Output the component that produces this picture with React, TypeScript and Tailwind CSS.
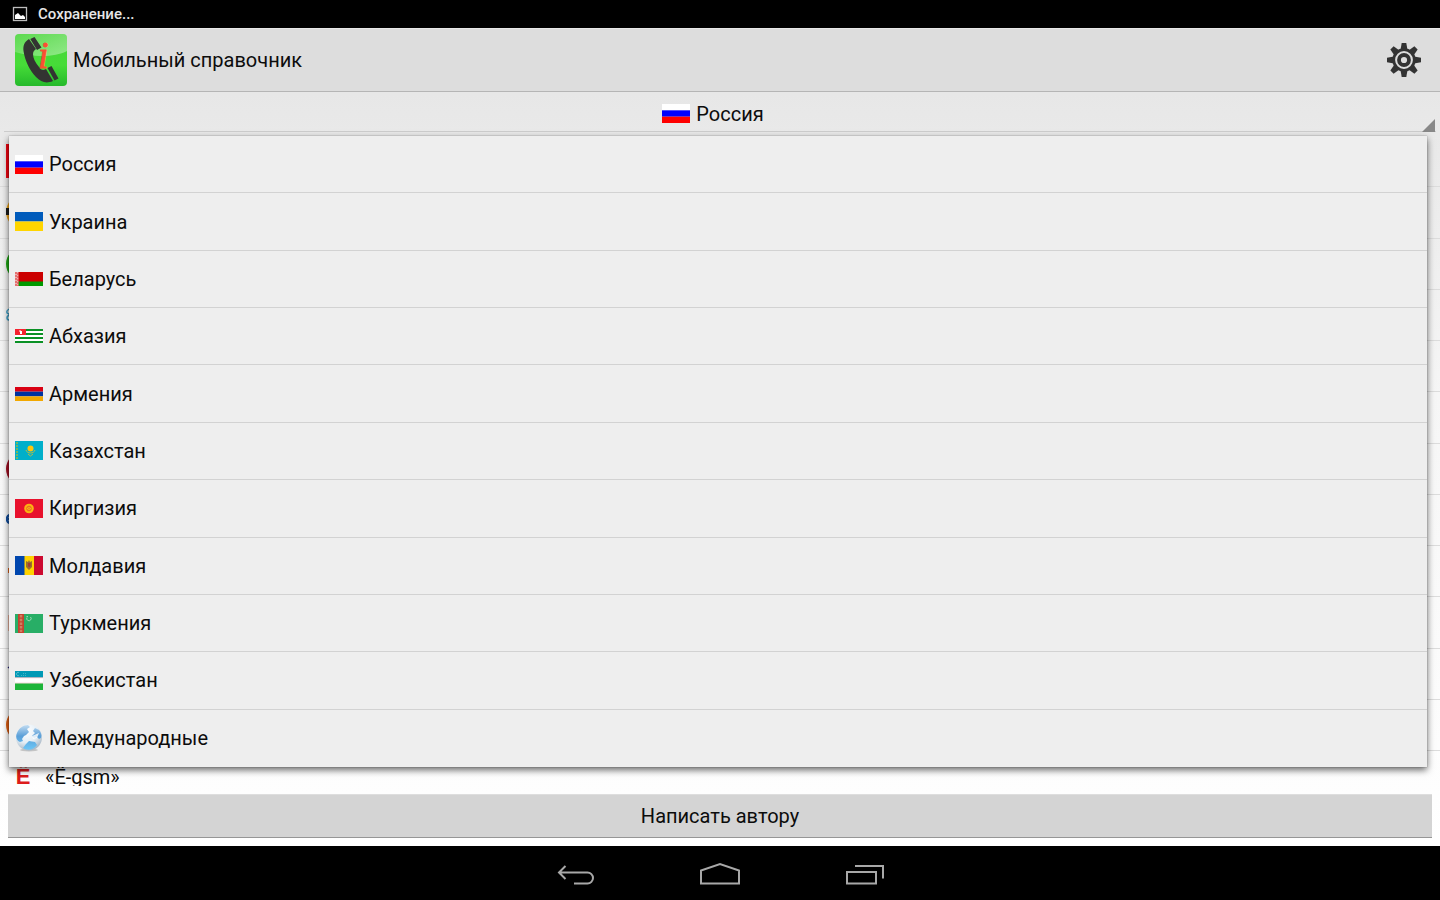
import { useState } from 'react'
import type { ReactNode } from 'react'

type Country = {
  name: string
  flag: ReactNode
}

function Flag({ height = 19, children }: { height?: number; children: ReactNode }) {
  return (
    <svg width="28" height={height} viewBox={`0 0 28 ${height}`} className="shrink-0" aria-hidden="true">
      {children}
    </svg>
  )
}

function Stripes({ colors, height = 19 }: { colors: string[]; height?: number }) {
  const step = height / colors.length
  return (
    <Flag height={height}>
      {colors.map((color, i) => (
        <rect key={i} y={i * step} width="28" height={step} fill={color} />
      ))}
    </Flag>
  )
}

function Globe() {
  return (
    <svg width="28" height="28" viewBox="0 0 28 28" className="shrink-0" aria-hidden="true">
      <defs>
        <radialGradient id="globe" cx="40%" cy="25%" r="75%">
          <stop offset="0" stopColor="#ffffff" />
          <stop offset="0.6" stopColor="#e3edf5" />
          <stop offset="1" stopColor="#a9b8c6" />
        </radialGradient>
        <linearGradient id="land" x1="0" y1="0" x2="0" y2="1">
          <stop offset="0" stopColor="#c3dcf1" />
          <stop offset="0.45" stopColor="#5a9fd8" />
          <stop offset="1" stopColor="#6cc6f6" />
        </linearGradient>
      </defs>
      <ellipse cx="14" cy="26" rx="9" ry="1.5" fill="#c4c4c4" />
      <circle cx="14" cy="13.5" r="13" fill="url(#globe)" />
      <path
        d="M2 9C4 4 8 1 13 1L15 3L12 5L14 8L11 11L9 12L7 15L8 17L5 18C2 17 0 13 2 9ZM20 4L24 6C26 8 27 11 26 14L24 15L22 13L19 14L17 12L20 9L18 7ZM11 20L14 17L20 18L22 21C19 26 12 27 8 24Z"
        fill="url(#land)"
      />
      <path d="M17 12L24 9L22 14L18 15Z" fill="#fff" opacity="0.8" />
    </svg>
  )
}

const russia = <Stripes colors={['#ffffff', '#0000fe', '#fe0000']} />

const countries: Country[] = [
  { name: 'Россия', flag: russia },
  { name: 'Украина', flag: <Stripes colors={['#005bbb', '#ffd500']} /> },
  {
    name: 'Беларусь',
    flag: (
      <Flag height={14}>
        <rect width="28" height="10" fill="#cb0000" />
        <rect y="9.5" width="28" height="4.5" fill="#009900" />
        <rect width="3.5" height="14" fill="#eeb0b0" />
        <path d="M1 0V14M3 1V14" stroke="#d33" strokeWidth="1" strokeDasharray="2 1" />
      </Flag>
    ),
  },
  {
    name: 'Абхазия',
    flag: (
      <Flag height={14}>
        <rect width="28" height="14" fill="#fff" />
        <path d="M0 1H28M0 5H28M0 9H28M0 13H28" stroke="#0a9125" strokeWidth="2" />
        <rect width="11" height="6" fill="#f5222f" />
        <path d="M4.5 2.5V1.5M5.5 5V1.5M6.5 5V2" stroke="#fff" strokeWidth="1" />
      </Flag>
    ),
  },
  { name: 'Армения', flag: <Stripes height={14} colors={['#d90012', '#0033a0', '#f2a800']} /> },
  {
    name: 'Казахстан',
    flag: (
      <Flag>
        <rect width="28" height="19" fill="#00afca" />
        <path d="M2 1V18" stroke="#9cb93e" strokeWidth="1.5" strokeDasharray="2 1" />
        <circle cx="15.5" cy="7.5" r="3" fill="#fec50c" />
        <path d="M11 9C12 13 19 13 20 9M13 13L15.5 15L18 13" stroke="#b4bd45" fill="none" />
      </Flag>
    ),
  },
  {
    name: 'Киргизия',
    flag: (
      <Flag>
        <rect width="28" height="19" fill="#e8112d" />
        <circle cx="14" cy="9.5" r="4.8" fill="#fbb211" />
        <circle cx="14" cy="9.5" r="2.3" fill="#f6cf15" stroke="#e9472a" strokeWidth="0.8" />
        <path d="M12.5 8L15.5 11M15.5 8L12.5 11" stroke="#e9472a" strokeWidth="0.6" />
      </Flag>
    ),
  },
  {
    name: 'Молдавия',
    flag: (
      <Flag>
        <rect width="10" height="19" fill="#0046ae" />
        <rect x="9.5" width="9.5" height="19" fill="#ffd200" />
        <rect x="19" width="9" height="19" fill="#cc092f" />
        <path d="M11 5L13 6L14 4L15 6L17 5V11L14 14L11 11Z" fill="#99702e" />
        <path d="M13 7H15.5V10L14 11.5L13 10Z" fill="#a33b32" />
      </Flag>
    ),
  },
  {
    name: 'Туркмения',
    flag: (
      <Flag>
        <rect width="28" height="19" fill="#28ae66" />
        <rect x="3" width="6" height="19" fill="#c4432f" />
        <path d="M6 1V18" stroke="#cf7f60" strokeWidth="2.5" strokeDasharray="2.5 1.2" />
        <path d="M12 3.500A2.200 2.200 0 1 0 15.500 3" stroke="#9bdab5" fill="none" />
        <path d="M11.5 2.500H13" stroke="#9bdab5" />
      </Flag>
    ),
  },
  {
    name: 'Узбекистан',
    flag: (
      <Flag>
        <rect width="28" height="19" fill="#fff" />
        <rect width="28" height="6.5" fill="#0099b5" />
        <path d="M0 6.700H28M0 12.200H28" stroke="#e9a0a4" strokeWidth="0.6" />
        <rect y="12.5" width="28" height="6.5" fill="#1eb53a" />
        <path d="M4 1.500A1.700 1.700 0 1 0 4 4.500" stroke="#6cc4d4" strokeWidth="0.8" fill="none" />
        <path d="M6 4.500H11M8 2.500H11" stroke="#6cc4d4" strokeWidth="0.6" strokeDasharray="1 1" />
      </Flag>
    ),
  },
  { name: 'Международные', flag: <Globe /> },
]

// operator logos, one per row of the list under the drop-down
const operators: ReactNode[] = [
  <rect width="34" height="34" fill="#f00511" />,
  <>
    <circle cx="17" cy="17" r="17" fill="#f5a81c" />
    <path d="M0 13H34V20H0Z" fill="#1c1c1c" />
  </>,
  <circle cx="17" cy="17" r="17" fill="#1fa814" />,
  <path d="M3 11C0 13 0 15 3 16M4 17C0 18 0 22 4 22" stroke="#3f9fc6" strokeWidth="1.5" fill="none" />,
  null,
  null,
  <circle cx="17" cy="17" r="17" fill="#a50f24" />,
  <path d="M7 16H1C1 11 6 11 7 13M1 16C1 21 6 21 7 19" stroke="#1450a0" strokeWidth="2.5" fill="none" />,
  <rect x="2" y="14" width="8" height="5" fill="#e8641b" />,
  <rect x="2" y="10" width="12" height="16" fill="#f3b9a3" />,
  <path d="M2 10L6 13" stroke="#25257c" strokeWidth="1.5" />,
  <circle cx="17" cy="17" r="17" fill="#e05f12" />,
]

function AppLogo() {
  return (
    <svg width="52" height="52" viewBox="0 0 52 52" aria-hidden="true">
      <defs>
        <linearGradient id="logo" x1="0" y1="0" x2="0" y2="1">
          <stop offset="0" stopColor="#4ad53b" />
          <stop offset="0.6" stopColor="#46dc38" />
          <stop offset="1" stopColor="#25b92b" />
        </linearGradient>
        <linearGradient id="gloss" x1="0" y1="0" x2="1" y2="1">
          <stop offset="0" stopColor="#fff" stopOpacity="0.1" />
          <stop offset="1" stopColor="#fff" stopOpacity="0.4" />
        </linearGradient>
      </defs>
      <rect width="52" height="52" rx="4" fill="url(#logo)" />
      <path d="M0 4Q0 0 4 0H48Q52 0 52 4V17C40 23 20 24 0 18Z" fill="url(#gloss)" />
      <path
        d="M14 5C9 8 8 12 8.500 17C10 27 15 37 21 43C26 48 31 50 38 47L31 35C28 37 26 36 24 33C20 28 18 24 18 20C18 17 20 16 21 15Z"
        fill="#333432"
      />
      <path
        d="M15.300 5L19.500 3L26.500 13.500L22 16ZM32.500 34L36.500 32L43.500 44.500L39.500 46.500Z"
        fill="#333432"
      />
      <text
        x="23"
        y="34"
        fontSize="38"
        fontStyle="italic"
        fontFamily="Liberation Serif, serif"
        fill="#fb4f32"
        stroke="#fb4f32"
        strokeWidth="0.8"
      >
        i
      </text>
    </svg>
  )
}

function GearIcon() {
  return (
    <svg width="34" height="34" viewBox="-17 -17 34 34" aria-hidden="true">
      {[0, 45, 90, 135, 180, 225, 270, 315].map(angle => (
        <path key={angle} d="M-3.500 -10L-2.300 -17H2.300L3.500 -10Z" transform={`rotate(${angle})`} fill="#333" />
      ))}
      <circle r="10.3" fill="none" stroke="#333" strokeWidth="2.8" />
      <circle r="5" fill="none" stroke="#333" strokeWidth="3.8" />
    </svg>
  )
}

export default function App() {
  const [country, setCountry] = useState('Россия')
  const current = countries.find(c => c.name === country) ?? countries[0]

  return (
    <div className="flex h-screen flex-col overflow-hidden bg-black font-[Roboto,sans-serif] text-[20px] leading-6 text-[#0c0c0c]">
      <div className="flex h-7 shrink-0 items-center gap-[10px] px-3 text-[15px] font-medium text-[#e6e6e6]">
        <svg width="16" height="16" viewBox="0 0 16 16" aria-hidden="true">
          <rect x="1.5" y="1.5" width="13" height="13" fill="none" stroke="#bdbdbd" strokeWidth="1.3" />
          <path d="M3 13V9L6 7L9 10L11 9L13 11V13Z" fill="#fff" />
        </svg>
        <span>Сохранение...</span>
      </div>

      <header className="flex h-16 shrink-0 items-center justify-between border-t border-b border-t-[#e8e8e8] border-b-[#b5b5b5] bg-[#dddddd] pr-[19px] pl-[15px]">
        <div className="flex items-center gap-[6px]">
          <AppLogo />
          <h1>Мобильный справочник</h1>
        </div>
        <button type="button" aria-label="Настройки">
          <GearIcon />
        </button>
      </header>

      <main className="flex min-h-0 flex-1 flex-col bg-linear-to-b from-[#e7e7e7] via-[#f6f6f6] via-40% to-white">
        <div className="relative z-10 shrink-0 px-1">
          <div className="flex h-10 items-center justify-center gap-[6px] border-b border-[#cccccc] pt-1 pr-[14px]">
            {current.flag}
            <select
              aria-label="Страна"
              value={country}
              onChange={e => setCountry(e.target.value)}
              className="field-sizing-content appearance-none bg-transparent outline-none"
            >
              {countries.map(c => (
                <option key={c.name}>{c.name}</option>
              ))}
            </select>
          </div>
          <svg width="13" height="13" viewBox="0 0 13 13" className="absolute right-[5px] bottom-0" aria-hidden="true">
            <path d="M13 0V13H0Z" fill="#888" />
          </svg>

          <ul className="absolute top-11 right-[13px] left-[9px] grid h-[631px] auto-rows-fr bg-[#eeeeee] shadow-[0_0_1px_rgba(0,0,0,0.4),0_3px_7px_rgba(0,0,0,0.6)]">
            {countries.map(c => (
              <li key={c.name} className="border-b border-[#d2d2d2] last:border-b-0">
                <button
                  type="button"
                  onClick={() => setCountry(c.name)}
                  className="flex h-full w-full items-center gap-[6px] px-[6px] text-left"
                >
                  {c.flag}
                  <span>{c.name}</span>
                </button>
              </li>
            ))}
          </ul>
        </div>

        <div className="min-h-0 flex-1 overflow-hidden pt-1">
          <ul className="grid h-[615px] auto-rows-fr">
            {operators.map((logo, i) => (
              <li key={i} className="flex items-center border-b border-[#dcdcdc] px-[6px]">
                <svg width="34" height="34" viewBox="0 0 34 34" aria-hidden="true">
                  {logo}
                </svg>
              </li>
            ))}
          </ul>
          <div className="flex h-[51px] items-center gap-[5px] px-[6px]">
            <span className="w-[34px] text-center font-[Liberation_Sans,sans-serif] text-[22px] font-bold text-[#dd1c1c]">
              Ё
            </span>
            <span>«Ё-gsm»</span>
          </div>
        </div>

        <div className="shrink-0 p-2">
          <button
            type="button"
            className="h-11 w-full border-t border-b border-t-[#dedede] border-b-[#969696] bg-[#d4d4d4]"
          >
            Написать автору
          </button>
        </div>
      </main>

      <nav className="flex h-[54px] shrink-0 items-center justify-center gap-[100px] pt-[2px]">
        <button type="button" aria-label="Назад">
          <svg width="44" height="24" viewBox="0 0 44 24" fill="none" stroke="#a8a8a8" strokeWidth="2" aria-hidden="true">
            <path d="M11.5 4L5 10.500L11.500 17M5 10.500H33.500A5.500 5.500 0 0 1 33.500 21.500H20" />
          </svg>
        </button>
        <button type="button" aria-label="Домой">
          <svg width="44" height="24" viewBox="0 0 44 24" fill="none" stroke="#a8a8a8" strokeWidth="2" aria-hidden="true">
            <path d="M3 21.500V8.500L22 2L41 8.500V21.500Z" />
          </svg>
        </button>
        <button type="button" aria-label="Недавние">
          <svg width="44" height="24" viewBox="0 0 44 24" fill="none" stroke="#a8a8a8" strokeWidth="2" aria-hidden="true">
            <path d="M5 10H34V21.500H5ZM13 4H41V16.500" />
          </svg>
        </button>
      </nav>
    </div>
  )
}
